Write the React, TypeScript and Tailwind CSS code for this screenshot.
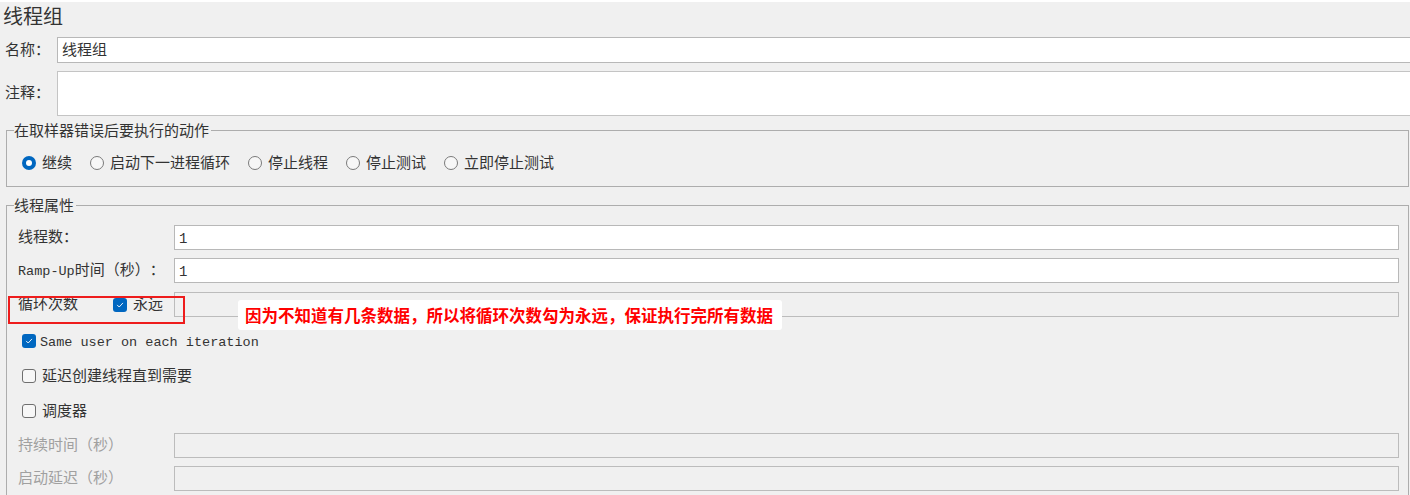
import React from "react";

function T({ children, className = "" }: { children: React.ReactNode; className?: string }) {
  return <span className={"relative top-[2px] " + className}>{children}</span>;
}

function Radio({ checked, label }: { checked?: boolean; label: string }) {
  return (
    <div className="flex items-center">
      {checked ? (
        <div className="w-[14px] h-[14px] rounded-full bg-[#0067c0] flex items-center justify-center">
          <div className="w-[6px] h-[6px] rounded-full bg-white" />
        </div>
      ) : (
        <div className="w-[14px] h-[14px] rounded-full border border-[#7a7a7a] bg-[#f7f7f7]" />
      )}
      <T className="ml-[6px]">{label}</T>
    </div>
  );
}

function Check({ checked }: { checked?: boolean }) {
  return checked ? (
    <div className="w-[14px] h-[14px] rounded-[3px] bg-[#0067c0] flex items-center justify-center shrink-0">
      <svg width="10" height="10" viewBox="0 0 10 10" fill="none">
        <path d="M2.4 5.2 L4.2 7 L7.7 3.2" stroke="white" strokeWidth="0.9" strokeLinecap="round" strokeLinejoin="round" />
      </svg>
    </div>
  ) : (
    <div className="w-[14px] h-[14px] rounded-[3px] border border-[#6f6f6f] bg-[#f7f7f7] shrink-0" />
  );
}

export default function App() {
  return (
    <div className="relative w-[1410px] h-[495px] overflow-hidden bg-[#f0f0f0] border-t-2 border-white text-[15px] text-[#333] font-['Liberation_Mono','Noto_Sans_CJK_SC',monospace] [text-spacing-trim:space-all]">
      <div className="pl-[3px] h-[35px] text-[20px] leading-[30px]">
        <T>线程组</T>
      </div>

      <div className="flex items-center h-[26px]">
        <div className="w-[57px] pl-[5px]"><T>名称：</T></div>
        <div className="flex-1 h-full bg-white border border-[#b8b8b8] border-r-0 flex items-center pl-[4px]"><T>线程组</T></div>
      </div>

      <div className="flex items-center h-[45px] mt-[8px]">
        <div className="w-[57px] pl-[5px]"><T>注释：</T></div>
        <div className="flex-1 h-full bg-white border border-[#c4c4c4] border-r-0" />
      </div>

      <fieldset className="ml-[6px] mr-[1px] mt-[6px] border border-[#adadad] px-[7px] pb-[13px]">
        <legend className="leading-[17px] pr-[2px]"><T>在取样器错误后要执行的动作</T></legend>
        <div className="flex items-center h-[20px] mt-[14px] ml-[8px] gap-[18px]">
          <Radio checked label="继续" />
          <Radio label="启动下一进程循环" />
          <Radio label="停止线程" />
          <Radio label="停止测试" />
          <Radio label="立即停止测试" />
        </div>
      </fieldset>

      <fieldset className="ml-[6px] mr-[1px] mt-[10px] border border-[#adadad] pl-[7px] pr-[9px] pb-[40px]">
        <legend className="leading-[17px] pr-[2px]"><T>线程属性</T></legend>

        <div className="flex items-center h-[25px] mt-[11px]">
          <div className="w-[160px] pl-[4px]"><T>线程数：</T></div>
          <div className="flex-1 h-full bg-white border border-[#b8b8b8] flex items-center pl-[4px] text-[14px]"><T>1</T></div>
        </div>

        <div className="flex items-center h-[25px] mt-[8px]">
          <div className="w-[160px] pl-[4px] whitespace-nowrap">
            <T><span className="text-[13.5px]">Ramp-Up</span>时间（秒）：</T>
          </div>
          <div className="flex-1 h-full bg-white border border-[#b8b8b8] flex items-center pl-[4px] text-[14px]"><T>1</T></div>
        </div>

        <div className="flex items-center h-[25px] mt-[9px]">
          <div className="w-[160px] pl-[4px] flex items-center">
            <T className="w-[95px]">循环次数</T>
            <Check checked />
            <T className="ml-[6px]">永远</T>
          </div>
          <div className="flex-1 h-full border border-[#bcbcbc]" />
        </div>

        <div className="flex items-center h-[20px] mt-[14px] ml-[8px]">
          <Check checked />
          <T className="ml-[4px] text-[13.5px]">Same user on each iteration</T>
        </div>

        <div className="flex items-center h-[20px] mt-[15px] ml-[8px]">
          <Check />
          <T className="ml-[6px]">延迟创建线程直到需要</T>
        </div>

        <div className="flex items-center h-[20px] mt-[15px] ml-[8px]">
          <Check />
          <T className="ml-[6px]">调度器</T>
        </div>

        <div className="flex items-center h-[25px] mt-[12px]">
          <div className="w-[160px] pl-[4px] text-[#a0a0a0]"><T>持续时间（秒）</T></div>
          <div className="flex-1 h-full border border-[#bcbcbc]" />
        </div>

        <div className="flex items-center h-[25px] mt-[8px]">
          <div className="w-[160px] pl-[4px] text-[#a0a0a0]"><T>启动延迟（秒）</T></div>
          <div className="flex-1 h-full border border-[#bcbcbc]" />
        </div>
      </fieldset>

      <div className="absolute left-[8px] top-[294px] w-[177px] h-[28px] border-2 border-[#ee1c1c]" />

      <div className="absolute left-[238px] top-[298px] w-[544px] h-[30px] bg-white rounded-[3px] flex items-center pl-[7px] text-[16.5px] leading-[24px] font-bold text-[#ff0000] font-['Noto_Sans_CJK_SC',sans-serif] whitespace-nowrap">
        因为不知道有几条数据，所以将循环次数勾为永远，保证执行完所有数据
      </div>
    </div>
  );
}
